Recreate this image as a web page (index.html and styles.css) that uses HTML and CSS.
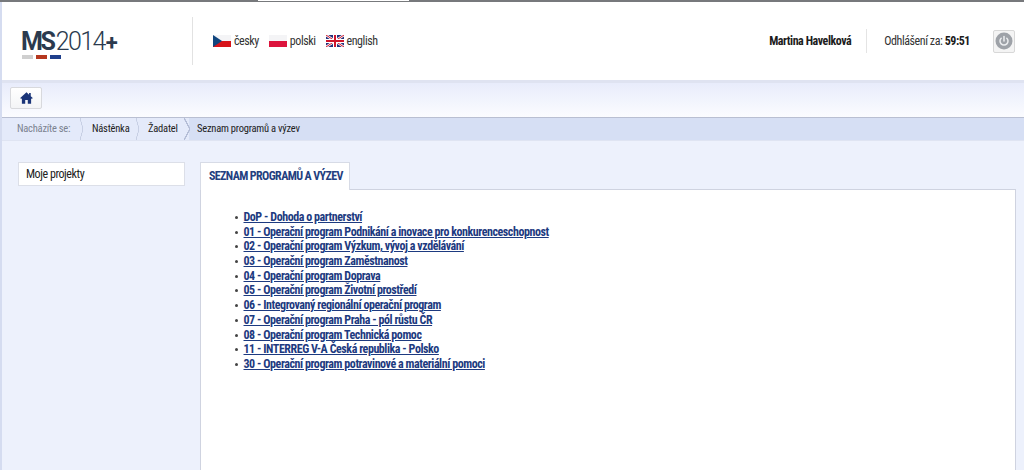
FILE: index.html
```html
<!DOCTYPE html>
<html lang="cs">
<head>
<meta charset="utf-8">
<title>Seznam programů a výzev</title>
<link rel="stylesheet" href="styles.css">
</head>
<body>
<div class="chrome"><div class="chrome-tab"></div></div>
<div class="page">
  <header class="header">
    <div class="logo">
      <div class="logo-text"><b class="logo-ms">MS</b><span>2014</span><b class="plus">+</b></div>
      <div class="logo-bars"><i class="bar-grey"></i><i class="bar-red"></i><i class="bar-blue"></i></div>
    </div>
    <div class="langs">
      <a class="lang">
        <svg class="flag" viewBox="0 0 18 12"><rect width="18" height="6" fill="#f4f4f6"/><rect y="6" width="18" height="6" fill="#d7141a"/><path d="M0 0L9 6L0 12Z" fill="#11457e"/></svg>
        česky</a>
      <a class="lang">
        <svg class="flag" viewBox="0 0 18 12"><rect width="18" height="6" fill="#f4f4f6"/><rect y="6" width="18" height="6" fill="#dc143c"/></svg>
        polski</a>
      <a class="lang">
        <svg class="flag" viewBox="0 0 18 12"><rect width="18" height="12" fill="#26307a"/><path d="M0 0L18 12M18 0L0 12" stroke="#fff" stroke-width="2.4"/><path d="M0 0L18 12M18 0L0 12" stroke="#cf142b" stroke-width="1"/><path d="M9 0V12M0 6H18" stroke="#fff" stroke-width="4"/><path d="M9 0V12M0 6H18" stroke="#cf142b" stroke-width="2"/></svg>
        english</a>
    </div>
    <div class="user">
      <span class="user-name">Martina Havelková</span>
      <span class="logout-time">Odhlášení za: <b>59:51</b></span>
      <button class="power" aria-label="Odhlásit">
        <svg viewBox="0 0 18 18" width="18" height="18"><circle cx="9" cy="9" r="8.5" fill="#9ea2a8"/><path d="M6.2 6.2a4 4 0 1 0 5.6 0" fill="none" stroke="#eceef0" stroke-width="1.5" stroke-linecap="round"/><path d="M9 4.6V9" stroke="#eceef0" stroke-width="1.5" stroke-linecap="round"/></svg>
      </button>
    </div>
  </header>
  <div class="toolbar">
    <button class="home" aria-label="Domů">
      <svg viewBox="0 0 14 13" width="13" height="12"><path d="M7 0.4L0.2 6.6L1.2 7.6L2 6.9V12.6H5.6V8.6H8.4V12.6H12V6.9L12.8 7.6L13.8 6.6L11.6 4.6V1H9.8V3L7 0.4Z" fill="#1a3478"/></svg>
    </button>
  </div>
  <nav class="crumbs">
    <span class="crumb crumb-label">Nacházíte se:</span>
    <span class="crumb crumb-link">Nástěnka</span>
    <span class="crumb crumb-link crumb-last">Žadatel</span>
    <span class="crumb crumb-current">Seznam programů a výzev</span>
  </nav>
  <main class="content">
    <aside class="sidebar"><a class="side-item">Moje projekty</a></aside>
    <section class="main">
      <div class="tab">SEZNAM PROGRAMŮ A VÝZEV</div>
      <div class="panel">
        <ul class="programs">
          <li><a>DoP - Dohoda o partnerství</a></li>
          <li><a>01 - Operační program Podnikání a inovace pro konkurenceschopnost</a></li>
          <li><a>02 - Operační program Výzkum, vývoj a vzdělávání</a></li>
          <li><a>03 - Operační program Zaměstnanost</a></li>
          <li><a>04 - Operační program Doprava</a></li>
          <li><a>05 - Operační program Životní prostředí</a></li>
          <li><a>06 - Integrovaný regionální operační program</a></li>
          <li><a>07 - Operační program Praha - pól růstu ČR</a></li>
          <li><a>08 - Operační program Technická pomoc</a></li>
          <li><a>11 - INTERREG V-A Česká republika - Polsko</a></li>
          <li><a>30 - Operační program potravinové a materiální pomoci</a></li>
        </ul>
      </div>
    </section>
  </main>
</div>
</body>
</html>
```
FILE: styles.css
```css
* { box-sizing: border-box; }
html, body { margin: 0; height: 100%; overflow: hidden; }
body {
  font-family: "Roboto Condensed", "Liberation Sans Narrow", Roboto, sans-serif;
  font-stretch: 75%;
  font-size: 12px;
  letter-spacing: -0.44px;
  color: #222;
  background: #edf1fc;
}
.chrome { height: 2px; background: #77797c; padding-left: 258px; }
.chrome-tab { width: 151px; height: 1px; background: #fff; }
.page { height: 468px; border-left: 2px solid #d5dcf0; display: flex; flex-direction: column; }
.header {
  height: 78px;
  flex: none;
  background: #fff;
  display: flex;
  align-items: center;
}
.logo { width: 191px; height: 48px; padding: 13px 0 0 19px; border-right: 1px solid #e2e2e2; margin-right: 20px; flex: none; }
.logo-text { font-family: Roboto, sans-serif; font-stretch: 100%; font-size: 25px; line-height: 23px; color: #2b3a4e; white-space: nowrap; }
.logo-ms { font-weight: 700; letter-spacing: -2.3px; margin-right: 2px; }
.logo-text span { font-weight: 300; letter-spacing: -1.6px; }
.plus { font-size: 22px; font-weight: 700; letter-spacing: 0; margin-left: 1px; }
.logo-bars { display: flex; gap: 3px; padding-top: 1px; padding-left: 1px; }
.logo-bars i { width: 11px; height: 4px; }
.bar-grey { background: #cfcfcf; }
.bar-red { background: #b5371f; }
.bar-blue { background: #1f3f8c; }
.langs { display: flex; gap: 10px; align-items: center; }
.lang { display: flex; align-items: center; gap: 3px; color: #333; }
.flag { width: 18px; height: 12px; display: block; }
.user { margin-left: auto; display: flex; align-items: center; margin-right: 9px; }
.user-name { font-weight: 700; color: #1c1c1c; padding-right: 15px; height: 24px; line-height: 24px; border-right: 1px solid #e4e4e4; }
.logout-time { padding-left: 17px; color: #333; margin-right: 23px; }
.logout-time b { color: #1c1c1c; }
.power {
  width: 22px; height: 23px; padding: 0;
  display: flex; align-items: center; justify-content: center;
  background: #f4f4f4; border: 1px solid #d8d8d8; border-radius: 2px;
}
.toolbar {
  height: 38px;
  flex: none;
  background: linear-gradient(#dfe3f1 0, #dfe3f1 3px, #e8ecfb 3px, #fbfcff 100%);
  padding: 7px 0 0 8px;
  border-bottom: 1px solid #b9bfd2;
}
.home {
  width: 32px; height: 22px; padding: 0;
  display: flex; align-items: center; justify-content: center;
  background: linear-gradient(#fff, #f3f4f6);
  border: 1px solid #d8d9dd; border-radius: 2px;
}
.crumbs {
  height: 23px;
  flex: none;
  display: flex;
  align-items: stretch;
  background: #d6dff4;
  border-bottom: 1px solid #dfe4f2;
  font-size: 10.5px;
  letter-spacing: -0.22px;
  line-height: 22px;
}
.crumb { position: relative; white-space: nowrap; }
.crumb-label { width: 81px; padding-left: 15px; color: #7b8290; background: #e4eafa; }
.crumb-link { color: #222; padding-left: 9px; background: #e4eafa; width: 56px; }
.crumb-link.crumb-last { width: 50px; }
.crumb-current { flex: 1; padding-left: 8px; color: #222; }
.crumb-label::after, .crumb-link::after {
  content: "";
  position: absolute; top: 0; right: 0;
  width: 3px; height: 22px;
  background: linear-gradient(to bottom left, transparent 40%, #c7cfe4 44%, #c7cfe4 56%, transparent 60%) top / 100% 50% no-repeat,
              linear-gradient(to top left, transparent 40%, #c7cfe4 44%, #c7cfe4 56%, transparent 60%) bottom / 100% 50% no-repeat;
}
.crumb-link.crumb-last::after {
  right: -1px;
  width: 6px;
  background: linear-gradient(to bottom left, transparent 42%, #b4bdd6 45%, #b4bdd6 55%, #e4eafa 58%) top / 100% 50% no-repeat,
              linear-gradient(to top left, transparent 42%, #b4bdd6 45%, #b4bdd6 55%, #e4eafa 58%) bottom / 100% 50% no-repeat;
}
.content { flex: 1; display: flex; min-height: 0; padding: 21px 8px 0 16px; }
.sidebar { width: 167px; margin-right: 15px; flex: none; }
.side-item {
  display: block;
  height: 24px; line-height: 22px;
  padding-left: 7px;
  background: #fff;
  border: 1px solid #dcdfe8;
  color: #222;
}
.main { flex: 1; display: flex; flex-direction: column; min-width: 0; }
.tab {
  align-self: flex-start;
  width: 150px; height: 28px;
  line-height: 27px;
  margin-bottom: -1px;
  position: relative;
  padding-left: 8px;
  background: #fff;
  border: 1px solid #d7dbe6;
  border-bottom: 0;
  color: #24407f;
  font-weight: 700;
  letter-spacing: -0.62px;
  white-space: nowrap;
}
.panel { flex: 1; background: #fff; border: 1px solid #cfd3e0; border-bottom: 0; padding: 20px 0 0 24px; }
.programs { margin: 0; padding: 0; list-style: none; }
.programs li { height: 14.7px; line-height: 15px; position: relative; padding-left: 18.5px; font-weight: 700; white-space: nowrap; }
.programs li::before {
  content: "";
  position: absolute; left: 10px; top: 6px;
  width: 3px; height: 3px; background: #444; border-radius: 50%;
}
.programs a { color: #1d3a80; text-decoration: underline; }
```
